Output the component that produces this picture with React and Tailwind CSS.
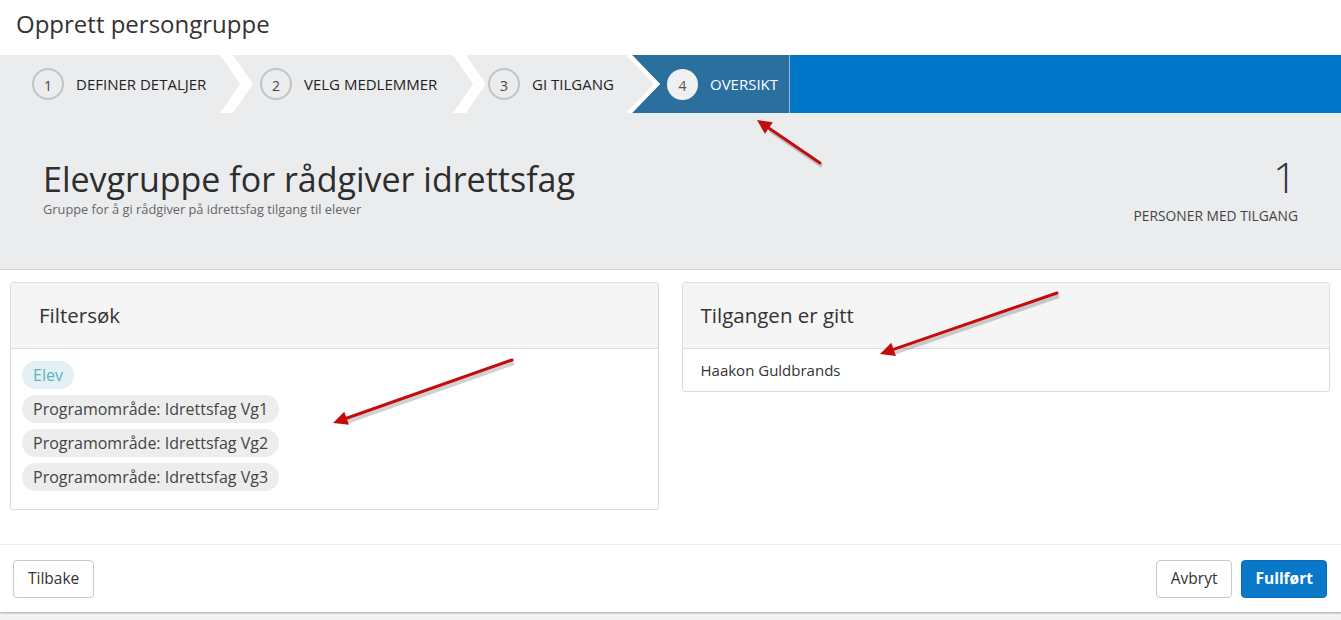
import React from 'react';

const steps = [
    { n: 1, label: 'Definer detaljer', w: 'w-[220px]', pl: 'pl-[32px]' },
    { n: 2, label: 'Velg medlemmer', w: 'w-[199px]', pl: 'pl-[6px]' },
    { n: 3, label: 'Gi tilgang', w: 'w-[131px]', pl: 'pl-[1px]' },
];

const filters = [
    'Programområde: Idrettsfag Vg1',
    'Programområde: Idrettsfag Vg2',
    'Programområde: Idrettsfag Vg3',
];

const Chevron = () => (
    <svg width="34" height="58" viewBox="0 0 34 58" className="shrink-0">
        <polygon points="0,0 13,0 33,29 13,58 0,58 20,29" fill="#ffffff" />
    </svg>
);

// last separator, leading into the active step
const ActiveChevron = () => (
    <svg width="42" height="58" viewBox="0 0 42 58" className="shrink-0">
        <polygon points="14,0 42,0 42,58 14,58 42,29" fill="#2b6f9f" />
        <polygon points="8,0 14,0 42,29 14,58 8,58 36,29" fill="#ffffff" />
    </svg>
);

const Arrow = ({ x1, y1, x2, y2 }) => {
    const a = Math.atan2(y2 - y1, x2 - x1);
    const len = 16;
    const spread = 0.45;
    const p1 = [x2 - len * Math.cos(a - spread), y2 - len * Math.sin(a - spread)];
    const p2 = [x2 - len * Math.cos(a + spread), y2 - len * Math.sin(a + spread)];
    const bx = x2 - len * 0.8 * Math.cos(a);
    const by = y2 - len * 0.8 * Math.sin(a);
    return (
        <g>
            <line x1={x1 + 2} y1={y1 + 3} x2={bx + 2} y2={by + 3} stroke="rgba(0,0,0,0.18)" strokeWidth="4" />
            <line x1={x1} y1={y1} x2={bx} y2={by} stroke="#c30d0d" strokeWidth="3" strokeLinecap="round" />
            <polygon points={`${x2},${y2} ${p1[0]},${p1[1]} ${p2[0]},${p2[1]}`} fill="#c30d0d" />
        </g>
    );
};

export default function App() {
    return (
        <div
            className="relative w-[1341px] h-[620px] overflow-hidden bg-[#f3f3f3]"
            style={{ fontFamily: '"Open Sans", "Noto Sans", sans-serif' }}
        >
            <div className="bg-white h-[612px] shadow-[0_1px_2px_rgba(0,0,0,0.35)] flex flex-col">
                {/* Header */}
                <div className="h-[55px] pl-[16px] pt-[8px] text-[24px] leading-[32px] text-[#333]">
                    Opprett persongruppe
                </div>

                {/* Gray summary area */}
                <div className="bg-[#ebecee] border-b border-[#d6d6d6] h-[215px] flex flex-col">
                    {/* Stepper */}
                    <div className="h-[58px] flex">
                        {steps.map((s, i) => (
                            <React.Fragment key={s.n}>
                                <div className={`${s.w} ${s.pl} shrink-0 flex items-center gap-[12px]`}>
                                    <span className="w-[32px] h-[32px] rounded-full border-2 border-[#c2c4c6] flex items-center justify-center text-[14px] text-[#444] pt-[2px]">
                                        {s.n}
                                    </span>
                                    <span className="uppercase text-[15px] text-[#222]">{s.label}</span>
                                </div>
                                {i < 2 ? <Chevron /> : <ActiveChevron />}
                            </React.Fragment>
                        ))}
                        <div className="w-[130px] shrink-0 bg-[#2b6f9f] flex items-center gap-[12px] pl-[7px] border-r border-[#8fb9d6]">
                            <span className="w-[31px] h-[31px] rounded-full bg-[#eef0f2] flex items-center justify-center text-[14px] text-[#555] pt-[2px]">
                                4
                            </span>
                            <span className="uppercase text-[15px] text-white">Oversikt</span>
                        </div>
                        <div className="flex-1 bg-[#0077c8]" />
                    </div>

                    {/* Summary */}
                    <div className="flex justify-between pl-[43px] pr-[43px] pt-[45px]">
                        <div>
                            <h1 className="text-[34px] leading-[42px] text-[#2d2d2d] font-normal">
                                Elevgruppe for rådgiver idrettsfag
                            </h1>
                            <p className="text-[12.8px] leading-[16px] text-[#666] mt-[1px]">
                                Gruppe for å gi rådgiver på idrettsfag tilgang til elever
                            </p>
                        </div>
                        <div className="flex flex-col items-end -mt-[5px]">
                            <span className="text-[42px] leading-[48px] font-light text-[#333] pr-[1px]">1</span>
                            <span className="uppercase text-[13.8px] text-[#444] mt-[5px]">Personer med tilgang</span>
                        </div>
                    </div>
                </div>

                {/* Panels */}
                <div className="flex-1 grid grid-cols-2 gap-[23px] pl-[10px] pr-[11px] pt-[12px] items-start">
                    <div className="border border-[#dcdcdc] rounded-[3px]">
                        <div className="h-[66px] bg-[#f5f5f5] border-b border-[#dcdcdc] rounded-t-[3px] flex items-center px-[28px] text-[20.5px] text-[#333]">
                            Filtersøk
                        </div>
                        <div className="pt-[12px] pb-[18px] px-[11px] flex flex-col items-start gap-[6px]">
                            <span className="h-[28px] rounded-full px-[11px] bg-[#e3f1f5] text-[#5ab3c4] text-[16px] flex items-center">
                                Elev
                            </span>
                            {filters.map((f) => (
                                <span key={f} className="h-[28px] rounded-full px-[11px] bg-[#ededee] text-[#444] text-[16px] flex items-center">
                                    {f}
                                </span>
                            ))}
                        </div>
                    </div>

                    <div className="border border-[#dcdcdc] rounded-[3px]">
                        <div className="h-[66px] bg-[#f5f5f5] border-b border-[#dcdcdc] rounded-t-[3px] flex items-center px-[18px] text-[20.5px] text-[#333]">
                            Tilgangen er gitt
                        </div>
                        <div className="h-[42px] flex items-center px-[18px] text-[15px] text-[#333]">
                            Haakon Guldbrands
                        </div>
                    </div>
                </div>

                {/* Footer */}
                <div className="h-[68px] border-t border-[#eeeeee] flex justify-between items-start pt-[15px] pl-[13px] pr-[14px]">
                    <button className="h-[38px] px-[14px] border border-[#c8c8c8] rounded-[4px] text-[15.5px] text-[#333] bg-white">
                        Tilbake
                    </button>
                    <div className="flex gap-[9px]">
                        <button className="h-[38px] px-[14px] border border-[#c8c8c8] rounded-[4px] text-[15.5px] text-[#333] bg-white">
                            Avbryt
                        </button>
                        <button className="h-[38px] px-[13px] border border-[#0a6fb8] rounded-[4px] text-[15.5px] font-bold text-white bg-[#0a78c8]">
                            Fullført
                        </button>
                    </div>
                </div>
            </div>

            {/* Annotation arrows */}
            <svg className="absolute inset-0 pointer-events-none" width="1341" height="620">
                <Arrow x1={820} y1={163} x2={757} y2={120} />
                <Arrow x1={512} y1={360} x2={333} y2={423} />
                <Arrow x1={1057} y1={293} x2={880} y2={354} />
            </svg>
        </div>
    );
}
